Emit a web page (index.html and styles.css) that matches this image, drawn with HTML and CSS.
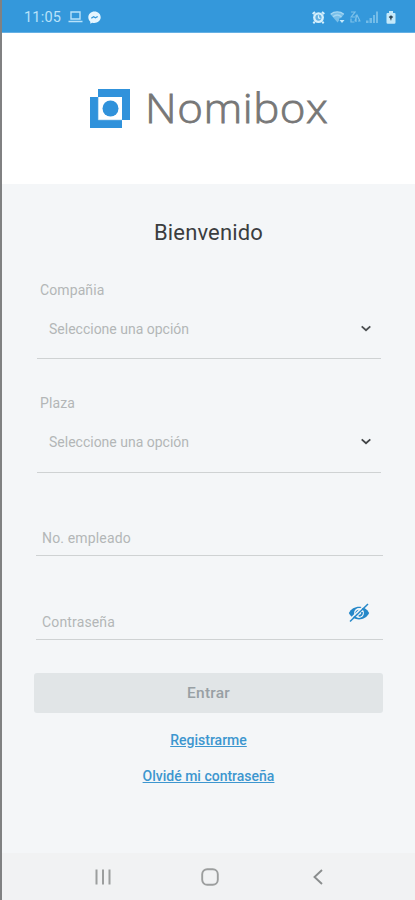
FILE: index.html
```html
<!DOCTYPE html>
<html lang="es">
<head>
<meta charset="utf-8">
<meta name="viewport" content="width=device-width, initial-scale=1">
<title>Nomibox</title>
<link rel="stylesheet" href="styles.css">
</head>
<body>
<div class="screen">
  <header class="status">
    <span class="time">11:05</span>
    <svg class="laptop" width="15" height="12" viewBox="0 0 15 12"><path d="M3 1h9v7H3zM.5 10.5h14" fill="none" stroke="currentColor" stroke-width="1.4"/></svg>
    <svg class="chat" width="13" height="13" viewBox="0 0 13 13"><path d="M6.5.4C3 .4.3 2.900.3 6.300c0 1.800.8 3.300 2 4.400v2l1.900-1c4.300 1.200 8.500-1.400 8.500-5.400C12.700 2.900 10 .4 6.500.4z" fill="#e6f6ff"/><path d="M3.300 7.300 5.600 5.700l1.800 1.100 2.300-1.300" fill="none" stroke="#3498db" stroke-width="1.300"/></svg>
    <div class="indicators">
      <svg width="13" height="13" viewBox="0 0 13 13"><path d="M.7 3 3 .9M12.300 3 10 .9M2.700 10.700 1.400 12.300M10.300 10.700l1.300 1.600" stroke="#d5effc" stroke-width="2"/><circle cx="6.500" cy="6.600" r="5.400" fill="#d5effc"/><circle cx="6.500" cy="6.600" r="3.100" fill="#64b1e2"/><path d="M6.500 4.300v2.500l1.800.8" fill="none" stroke="#d5effc" stroke-width="1.200"/></svg>
      <svg width="15" height="13" viewBox="0 0 15 13"><path d="M.5 3.300C4.500-.1 10-.1 14 3.300L7.500 11.500z" fill="#79bfe9"/><path d="M.7 3.200C4.500.1 10 .1 13.800 3.200M3 5.700c2.500-2 6-2 8.500 0" fill="none" stroke="#a5d7f3" stroke-width="1.300"/><path d="M9 9h5.500M12 7v5" stroke="#3498db" stroke-width="3"/><path d="m9.500 9 2.500 3 2.500-3" fill="#c5e9fb"/></svg>
      <svg width="11" height="12" viewBox="0 0 11 12"><path d="M1 1h4L1.200 6H5M1 7.500v3.500h3.500M6 4v7M5 10l2-6 3 6M8 10h2.500" fill="none" stroke="#7dc1ea" stroke-width="1.200"/></svg>
      <svg width="12" height="12" viewBox="0 0 12 12"><path d="M0 12h2.500V9.500H0zM3.500 12H6V7H3.500zM7 12h2V4H7zM10 12h2V.5h-2z" fill="#74bce8"/></svg>
      <svg class="battery" width="10" height="13" viewBox="0 0 10 13"><path d="M3 0h4v2h1.500Q9.500 2 9.500 3v8.500q0 1.300-1.300 1.300H1.800Q.5 12.800.5 11.500V3q0-1 1-1H3z" fill="#c5e9fa"/><path d="M5 4.200 7.300 6 5.700 7.300 5 10 4 7.300 2.700 6z" fill="#30495b"/></svg>
    </div>
  </header>
  <div class="brand">
    <svg class="mark" width="40" height="40" viewBox="0 0 40 40"><path d="M8 0h32v31h-8V8H8zM0 8h8v23h24v8H0z" fill="#3092db"/><path d="M8.300 8v23H32" fill="none" stroke="#86bfe9" stroke-width=".6"/><circle cx="20.500" cy="19.500" r="8" fill="#3092db"/></svg>
    <span class="wordmark">Nomibox</span>
  </div>
  <main class="form">
    <h1>Bienvenido</h1>
    <section class="select company">
      <span class="label">Compañia</span>
      <div class="choice"><span>Seleccione una opción</span><svg width="12" height="8" viewBox="0 0 12 8"><path d="m1.700 1.300 4.300 3.900 4.300-3.900" fill="none" stroke="#4c4f51" stroke-width="1.800"/></svg></div>
    </section>
    <section class="select place">
      <span class="label">Plaza</span>
      <div class="choice"><span>Seleccione una opción</span><svg width="12" height="8" viewBox="0 0 12 8"><path d="m1.700 1.300 4.300 3.900 4.300-3.900" fill="none" stroke="#414446" stroke-width="1.800"/></svg></div>
    </section>
    <div class="field employee"><span>No. empleado</span></div>
    <div class="field password"><span>Contraseña</span>
      <svg class="eye" width="22" height="20" viewBox="0 0 22 20"><path d="M.8 10C5 1.500 17 1.500 21.200 10 17 18.500 5 18.500.8 10z" fill="#2688c9"/><circle cx="11" cy="10" r="4.900" fill="#f4f6f8"/><path d="M8 11.500c-.2-2.800 1-4 3.500-4M14 9c.3 2.500-1 3.700-3.300 3.900" fill="none" stroke="#2688c9" stroke-width="1.700"/><path d="M1 17.200 18.500.2" stroke="#f4f6f8" stroke-width="1.500"/><path d="M2 18.500 20 1" stroke="#2688c9" stroke-width="1.500"/></svg>
    </div>
    <button class="enter">Entrar</button>
    <a class="link register">Registrarme</a>
    <a class="link forgot">Olvidé mi contraseña</a>
  </main>
  <nav class="navigation">
    <svg width="16" height="16" viewBox="0 0 16 16"><path d="M1.500.5v15M8 .5v15M14.500.5v15" stroke="#9c9e9e" stroke-width="2"/></svg>
    <svg width="18" height="18" viewBox="0 0 18 18"><rect x="1.200" y="1.200" width="15.600" height="15.600" rx="5" fill="none" stroke="#9c9e9e" stroke-width="1.900"/></svg>
    <svg width="10" height="16" viewBox="0 0 10 16"><path d="M9 1 1.500 8 9 15" fill="none" stroke="#8a8d8d" stroke-width="1.900"/></svg>
  </nav>
</div>
</body>
</html>
```
FILE: styles.css
```css
* { box-sizing: border-box; }
body { margin: 0; background: #f4f6f8; font-family: Roboto, "Liberation Sans", sans-serif; }
svg { display: block; flex: none; }
.screen { width: 415px; height: 900px; display: flex; flex-direction: column; border-left: 2px solid #808182; overflow: hidden; }
.status { height: 33px; flex: none; display: flex; align-items: center; padding: 2px 19px 0 22px; background: #3498db; border-bottom: 1px solid #65b0e4; color: #b8e2fa; }
.time { width: 37px; font-size: 14.5px; white-space: nowrap; letter-spacing: .2px; }
.laptop { margin-left: 7px; }
.chat { margin-left: 5px; }
.indicators { display: flex; align-items: center; gap: 5px; margin-left: auto; }
.battery { margin-left: 3px; }
.brand { height: 151px; flex: none; display: flex; align-items: flex-start; padding: 56px 0 0 88px; background: #fff; }
.wordmark { margin: -8px 0 0 15px; font: 300 41px/52px "Open Sans", sans-serif; letter-spacing: .5px; color: #777; -webkit-text-stroke: .8px #777; transform: scaleX(1.07); transform-origin: left center; }
.form { height: 669px; flex: none; display: flex; flex-direction: column; padding: 0 32px; background: #f4f6f8; }
h1 { margin: 35px 0 0; font-size: 22px; line-height: 28px; font-weight: 400; letter-spacing: .15px; text-align: center; color: #3b3d3f; }
.select { margin: 0 2px 0 3px; border-bottom: 1px solid #cfd2d3; color: #b3b6b7; }
.company { height: 82px; margin-top: 30px; }
.place { height: 79px; margin-top: 35px; }
.label { display: block; margin-left: 3px; font-size: 14px; line-height: 18px; letter-spacing: .1px; }
.company .label { padding-top: 4px; }
.choice { display: flex; align-items: center; justify-content: space-between; margin-top: 20px; padding: 0 9px 0 12px; font-size: 14px; line-height: 20px; }
.field { display: flex; align-items: flex-end; justify-content: space-between; height: 84px; margin-left: 2px; padding: 0 13px 7px 6px; border-bottom: 1px solid #cfd2d3; color: #b3b6b7; font-size: 14px; line-height: 20px; letter-spacing: .15px; }
.employee { height: 83px; }
.eye { margin-bottom: 9px; }
.enter { height: 40px; flex: none; margin-top: 33px; border: 0; border-radius: 3px; background: #e1e5e7; font: 500 15.5px/20px Roboto, sans-serif; letter-spacing: .2px; color: #98a0a4; }
.link { align-self: center; color: #3d96cf; font-size: 14px; line-height: 18px; font-weight: 500; text-decoration: underline; }
.register { margin-top: 18px; }
.forgot { margin-top: 18px; }
.navigation { flex: 1; display: grid; grid-template-columns: 16px 18px 10px; column-gap: 90px; align-items: center; padding: 0 0 0 93px; background: #f1f2f3; }
.navigation svg:last-child { margin-left: 4px; }
```
